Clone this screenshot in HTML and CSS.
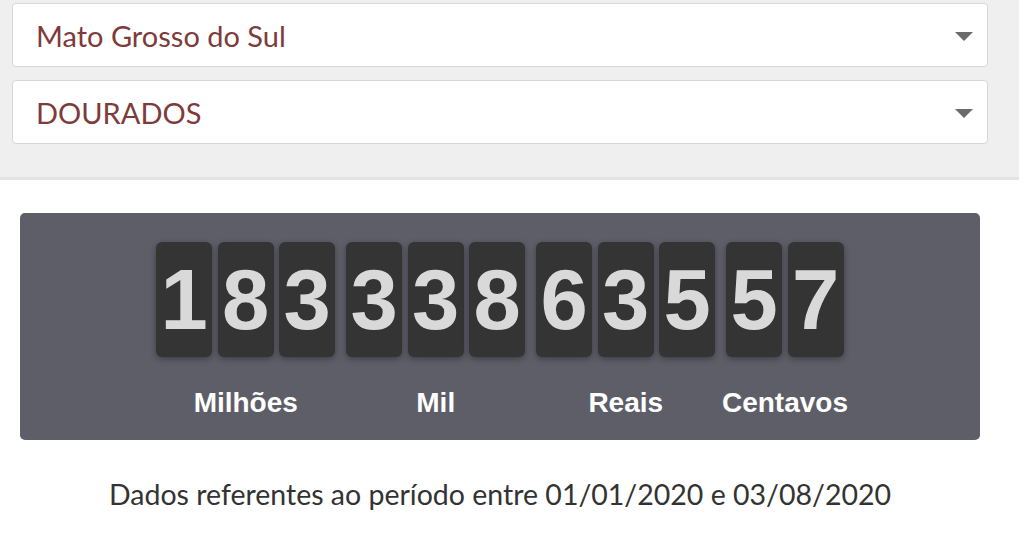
FILE: index.html
```html
<!DOCTYPE html>
<html lang="pt-BR">
<head>
<meta charset="utf-8">
<title>Contador</title>
<link rel="stylesheet" href="styles.css">
</head>
<body>
  <div class="filters">
    <div class="select">
      <span class="select-text">Mato Grosso do Sul</span>
      <span class="caret"></span>
    </div>
    <div class="select">
      <span class="select-text">DOURADOS</span>
      <span class="caret"></span>
    </div>
  </div>

  <div class="counter">
    <div class="groups">
      <div class="group">
        <div class="digits">
          <span class="digit">1</span><span class="digit">8</span><span class="digit">3</span>
        </div>
        <div class="label">Milhões</div>
      </div>
      <div class="group">
        <div class="digits">
          <span class="digit">3</span><span class="digit">3</span><span class="digit">8</span>
        </div>
        <div class="label">Mil</div>
      </div>
      <div class="group">
        <div class="digits">
          <span class="digit">6</span><span class="digit">3</span><span class="digit">5</span>
        </div>
        <div class="label">Reais</div>
      </div>
      <div class="group">
        <div class="digits">
          <span class="digit">5</span><span class="digit">7</span>
        </div>
        <div class="label">Centavos</div>
      </div>
    </div>
  </div>

  <p class="period">Dados referentes ao período entre 01/01/2020 e 03/08/2020</p>
</body>
</html>
```

FILE: styles.css
```css
html, body {
  margin: 0;
  padding: 0;
  background: #ffffff;
}

body {
  width: 1024px;
  height: 534px;
  overflow: hidden;
  font-family: "Lato", "Liberation Sans", sans-serif;
}

.filters {
  width: 1019px;
  box-sizing: border-box;
  background: #efefef;
  padding: 3px 31px 0 12px;
  height: 180px;
  border-bottom: 3px solid #e4e4e4;
  display: flex;
  flex-direction: column;
  gap: 13px;
}

.select {
  height: 64px;
  box-sizing: border-box;
  background: #ffffff;
  border: 1px solid #d6d6d6;
  border-radius: 4px;
  display: flex;
  align-items: center;
  justify-content: space-between;
  padding: 0 14px 0 23px;
}

.select-text {
  font-size: 29px;
  color: #7e3b3b;
}

.caret {
  width: 0;
  height: 0;
  border-left: 9px solid transparent;
  border-right: 9px solid transparent;
  border-top: 9px solid #6b6b6b;
  margin-top: 2px;
}

.counter {
  margin: 33px 0 0 20px;
  width: 960px;
  height: 227px;
  box-sizing: border-box;
  background: #5e5e69;
  border-radius: 5px;
  padding-top: 29px;
}

.groups {
  display: flex;
  justify-content: center;
  gap: 11px;
}

.group {
  display: flex;
  flex-direction: column;
  align-items: center;
}

.digits {
  display: flex;
  gap: 5.5px;
}

.digit {
  width: 56px;
  height: 115px;
  background: #343434;
  border-radius: 6px;
  box-shadow: 0 2px 6px rgba(0, 0, 0, 0.35);
  color: #d9d9d9;
  font-family: "Liberation Sans", Arial, sans-serif;
  font-weight: bold;
  font-size: 85px;
  line-height: 115px;
  text-align: center;
}

.label {
  margin: 30px -40px 0;
  white-space: nowrap;
  font-family: "Liberation Sans", Arial, sans-serif;
  font-weight: bold;
  font-size: 28px;
  line-height: 32px;
  color: #ffffff;
}

.period {
  width: 1000px;
  margin: 37px 0 0 0;
  text-align: center;
  font-size: 28.5px;
  line-height: 34px;
  color: #333333;
}
```
